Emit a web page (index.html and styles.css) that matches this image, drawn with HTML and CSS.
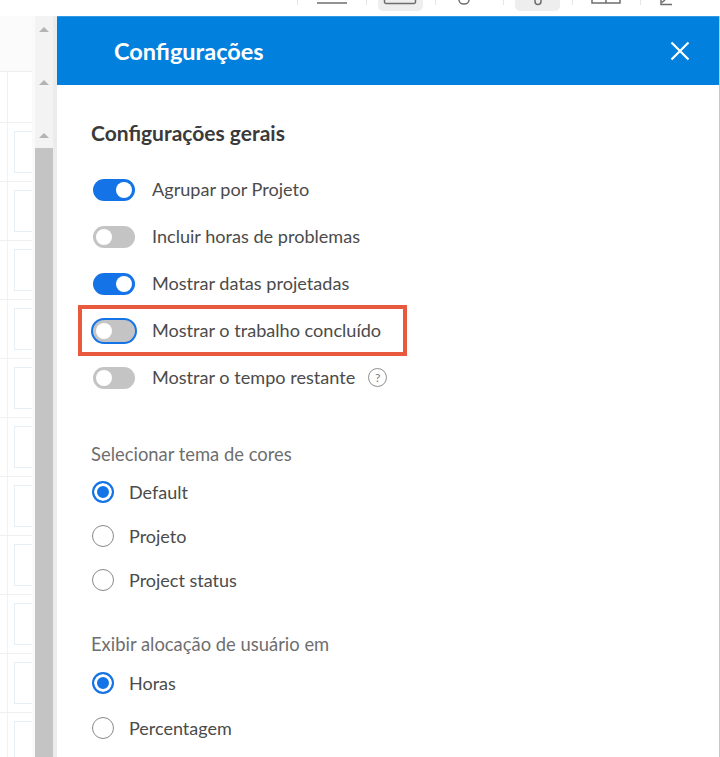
FILE: index.html
```html
<!DOCTYPE html>
<html lang="pt-BR">
<head>
<meta charset="utf-8">
<title>Configurações</title>
<link rel="stylesheet" href="styles.css">
</head>
<body>
<div class="app">
  <header class="toolbar">
    <span class="tool"><svg width="32" height="6" viewBox="0 0 32 6"><path d="M1 3h30" stroke="#6e6e6e" stroke-width="1.5"/></svg></span>
    <span class="tool"><span class="tool-bg active"><svg width="34" height="6" viewBox="0 0 34 6"><path d="M1.5 0v2a1.5 1.5 0 0 0 1.5 1.5h28A1.5 1.5 0 0 0 32.500 2V0" fill="none" stroke="#6e6e6e" stroke-width="1.5"/></svg></span></span>
    <span class="tool"><svg class="shift-a" width="14" height="6" viewBox="0 0 14 6"><path d="M2 0a5 4 0 0 0 10 0" fill="none" stroke="#6e6e6e" stroke-width="1.500"/></svg></span>
    <span class="tool"><span class="tool-bg active"><svg width="10" height="6" viewBox="0 0 10 6"><path d="M2 0v1.500a3 3 0 0 0 6 0V0" fill="none" stroke="#6e6e6e" stroke-width="1.5"/></svg></span></span>
    <span class="tool"><svg width="30" height="6" viewBox="0 0 30 6"><path d="M1 0v3h28V0M15 0v3" fill="none" stroke="#6e6e6e" stroke-width="1.5"/></svg></span>
    <span class="tool"><svg class="shift-b" width="14" height="6" viewBox="0 0 14 6"><path d="M2 0v4.500h11M6 0L3 2.500" fill="none" stroke="#6e6e6e" stroke-width="1.5"/></svg></span>
  </header>
  <div class="workspace">
    <div class="grid-side">
      <div class="grid-top"></div>
      <div class="grid-head"></div>
      <div class="grid-row"><div class="slot"></div></div>
      <div class="grid-row"><div class="slot"></div></div>
      <div class="grid-row"><div class="slot"></div></div>
      <div class="grid-row"><div class="slot"></div></div>
      <div class="grid-row"><div class="slot"></div></div>
      <div class="grid-row"><div class="slot"></div></div>
      <div class="grid-row"><div class="slot"></div></div>
      <div class="grid-row"><div class="slot"></div></div>
      <div class="grid-row"><div class="slot"></div></div>
      <div class="grid-row"><div class="slot"></div></div>
      <div class="grid-row"><div class="slot"></div></div>
    </div>
    <div class="scrollbar">
      <span class="arrow"></span>
      <span class="arrow"></span>
      <span class="arrow"></span>
      <div class="thumb"></div>
    </div>
    <aside class="panel">
      <div class="panel-head">
        <h1 class="panel-title">Configurações</h1>
        <svg class="close" width="20" height="20" viewBox="0 0 20 20"><path d="M1.500 1.500l17 17M18.500 1.500l-17 17" stroke="#fff" stroke-width="2.2" fill="none"/></svg>
      </div>
      <div class="panel-body">
        <h2 class="section-title">Configurações gerais</h2>
        <ul class="toggles">
          <li class="toggle-row"><span class="switch on"></span><span class="row-text">Agrupar por Projeto</span></li>
          <li class="toggle-row"><span class="switch"></span><span class="row-text">Incluir horas de problemas</span></li>
          <li class="toggle-row"><span class="switch on"></span><span class="row-text">Mostrar datas projetadas</span></li>
          <li class="toggle-row highlighted"><span class="switch focus"></span><span class="row-text">Mostrar o trabalho concluído</span></li>
          <li class="toggle-row"><span class="switch"></span><span class="row-text">Mostrar o tempo restante</span><span class="help">?</span></li>
        </ul>
        <section class="theme">
          <h3 class="group-label">Selecionar tema de cores</h3>
          <div class="radio-row"><span class="radio checked"></span><span>Default</span></div>
          <div class="radio-row"><span class="radio"></span><span>Projeto</span></div>
          <div class="radio-row"><span class="radio"></span><span>Project status</span></div>
        </section>
        <section class="alloc">
          <h3 class="group-label">Exibir alocação de usuário em</h3>
          <div class="radio-row"><span class="radio checked"></span><span>Horas</span></div>
          <div class="radio-row"><span class="radio"></span><span>Percentagem</span></div>
        </section>
      </div>
    </aside>
  </div>
</div>
</body>
</html>
```
FILE: styles.css
```css
*, *::before, *::after { box-sizing: border-box; }
html, body { margin: 0; padding: 0; height: 100%; overflow: hidden; background: #fff; }
body { font-family: "Lato", "Open Sans", sans-serif; color: #4b4b4b; font-size: 18px; }
.app { width: 720px; height: 757px; display: flex; flex-direction: column; overflow: hidden; }
.toolbar { height: 16px; flex: none; display: flex; justify-content: flex-end; align-items: flex-start; padding-right: 11px; background: #fff; }
.tool { width: 68.6px; height: 11px; display: flex; justify-content: center; align-items: flex-start; background: linear-gradient(#e6e6e6, #e6e6e6) left top / 1px 5px no-repeat; }
.tool-bg { width: 45px; height: 11px; display: flex; justify-content: center; align-items: flex-start; border-radius: 0 0 5px 5px; }
.tool-bg.active { background: #eeeeee; }
.shift-a { margin-right: 10px; }
.shift-b { margin-right: 17px; }
.workspace { flex: 1; display: flex; min-height: 0; border-right: 1px solid #c9c9c9; }
.grid-side { width: 32px; flex: none; display: flex; flex-direction: column; background: #fff; overflow: hidden; }
.grid-top { height: 55px; flex: none; background: #fbfbfb; }
.grid-head { height: 51px; flex: none; border-top: 1px solid #eeeeee; background: linear-gradient(#f0f0f0, #f0f0f0) 7px 0 / 1px 100% no-repeat; }
.grid-row { height: 59px; flex: none; padding: 8px 0 0 14px; border-top: 1px solid #eef1f3; background: linear-gradient(#f0f2f4, #f0f2f4) 7px 0 / 1px 100% no-repeat; }
.slot { height: 42px; border: 1px solid #e6eff6; border-right: 0; }
.scrollbar { width: 25px; flex: none; background: linear-gradient(90deg, #fafafa 0 3px, #f3f3f3 3px 21px, #ececec 21px); display: flex; flex-direction: column; align-items: center; padding-top: 11px; }
.arrow { width: 0; height: 0; border-left: 5px solid transparent; border-right: 5px solid transparent; border-bottom: 5px solid #b4b4b4; margin-bottom: 48px; margin-right: 1px; flex: none; }
.arrow:nth-child(3) { margin-bottom: 10px; }
.thumb { width: 18px; flex: 1; background: #c4c4c4; margin-right: 1px; }
.panel { flex: 1; display: flex; flex-direction: column; min-width: 0; background: #fff; }
.panel-head { height: 69px; flex: none; background: #0280dd; border-top: 1px solid #2f9ae6; display: flex; align-items: center; justify-content: space-between; padding: 0 29px 0 57px; }
.panel-title { margin: 0; font-size: 23.5px; font-weight: 700; color: #fff; }
.panel-body { padding: 34px 0 0 34px; }
.section-title { margin: 0; font-size: 21px; font-weight: 700; color: #3a3a3a; line-height: 28px; }
.toggles { list-style: none; margin: 19px 0 0; padding: 0; }
.toggle-row { height: 47px; display: flex; align-items: center; gap: 17px; position: relative; }
.row-text { font-size: 18.1px; position: relative; top: -1px; }
.highlighted::before { content: ""; position: absolute; left: -13px; top: -2px; width: 329px; height: 51px; border: 4px solid #e8593d; }
.switch { width: 42px; height: 22px; border-radius: 11px; background: #c4c4c4; position: relative; flex: none; margin-left: 2px; }
.switch::after { content: ""; position: absolute; left: 3px; top: 3px; width: 16px; height: 16px; border-radius: 50%; background: #fff; }
.switch.on { background: #1473e6; }
.switch.on::after { left: auto; right: 3px; }
.switch.focus { box-shadow: 0 0 0 2px #1473e6; }
.help { width: 19px; height: 19px; border: 1px solid #8e8e8e; border-radius: 50%; font-size: 12px; line-height: 17px; text-align: center; margin-left: -4px; color: #7a7a7a; }
.theme { margin-top: 41px; }
.alloc { margin-top: 30px; }
.group-label { margin: 0 0 4px; font-size: 18.4px; font-weight: 400; color: #6e6e6e; line-height: 24px; }
.radio-row { height: 44px; display: flex; align-items: center; gap: 15px; }
.alloc .radio-row { height: 45px; }
.radio { width: 22px; height: 22px; flex: none; margin-left: 1px; border-radius: 50%; border: 1.5px solid #8a8a8a; background: #fff; }
.radio.checked { border: 2px solid #1473e6; background: #1473e6; box-shadow: inset 0 0 0 3px #fff; }
```
